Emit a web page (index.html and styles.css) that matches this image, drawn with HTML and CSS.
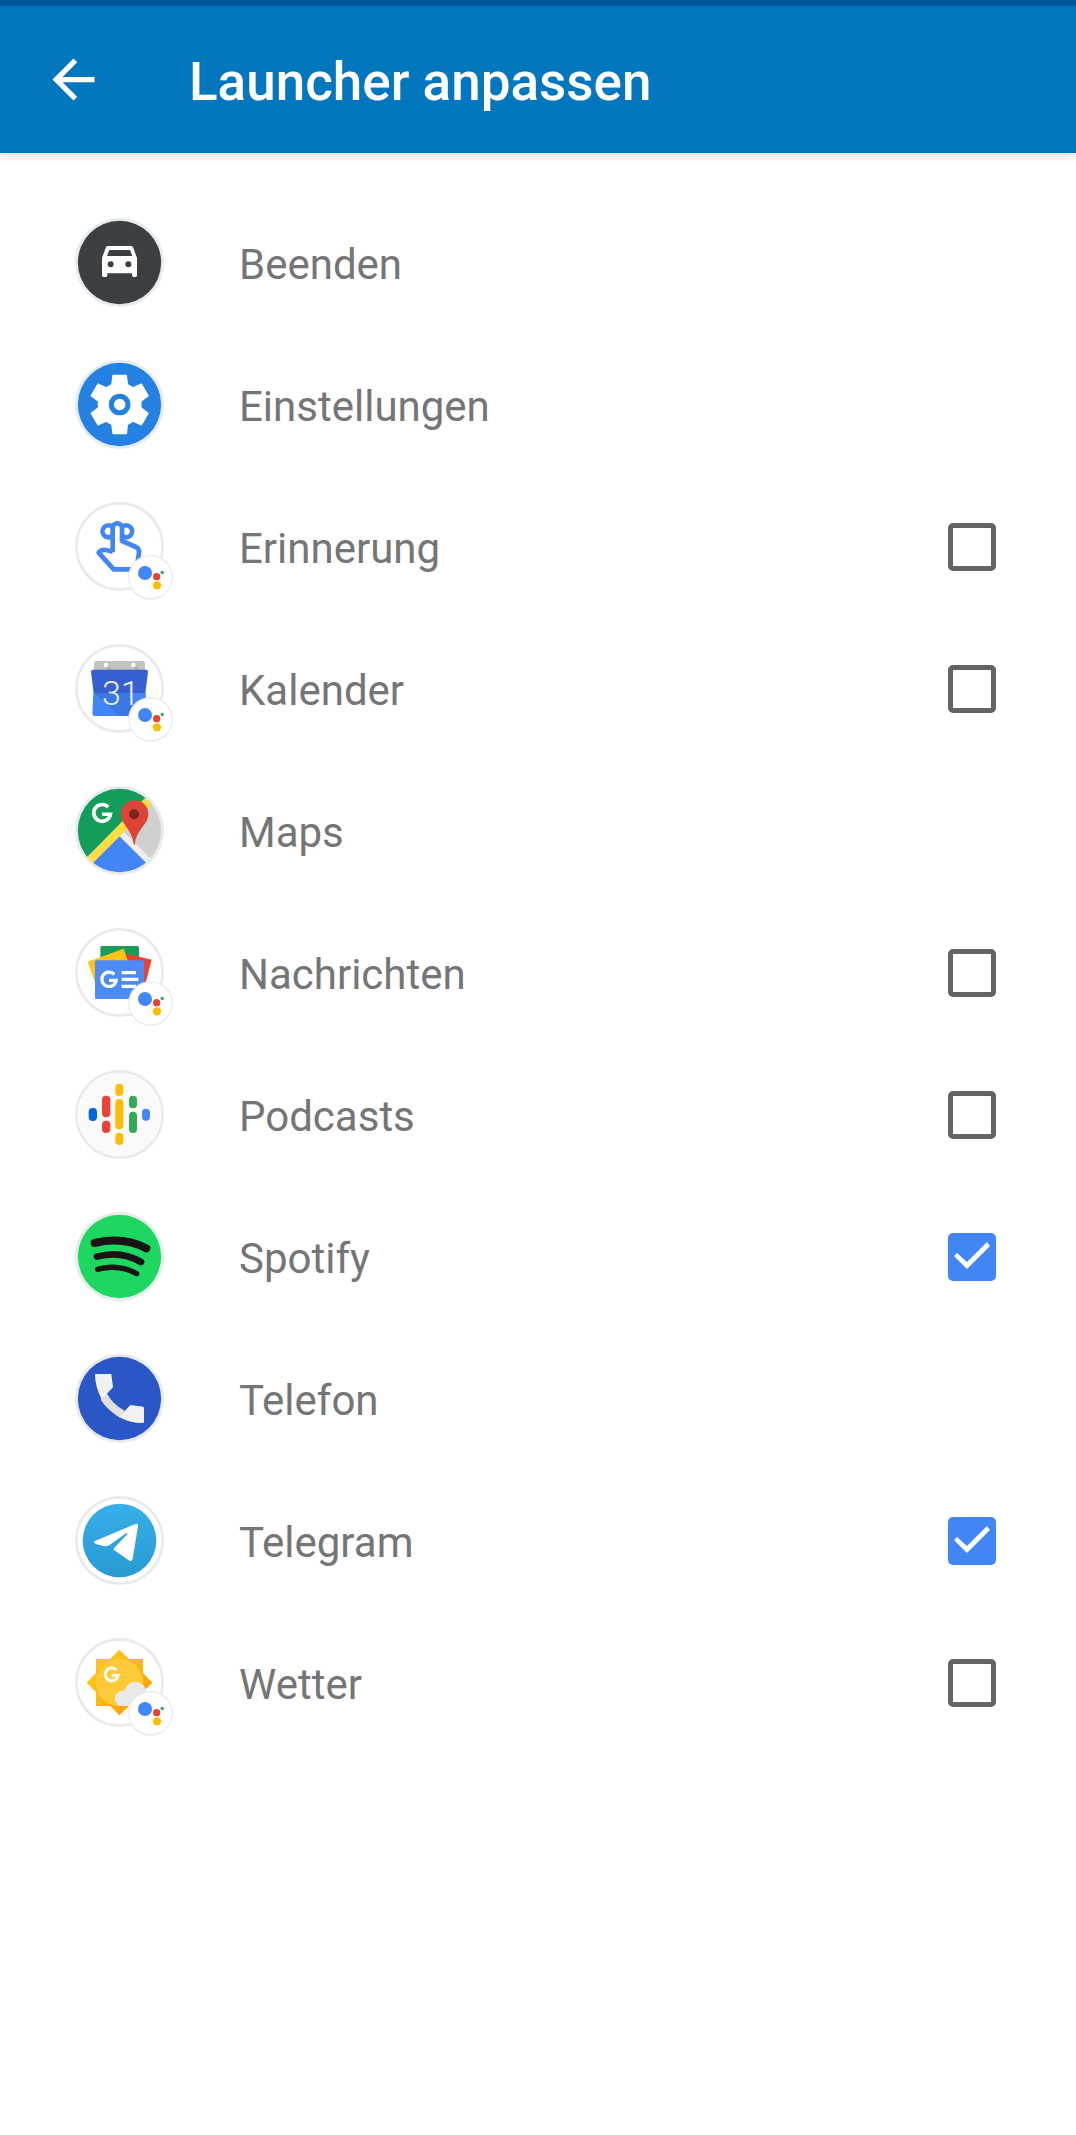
FILE: index.html
```html
<!DOCTYPE html>
<html lang="de">
<head>
<meta charset="utf-8">
<meta name="viewport" content="width=device-width, initial-scale=1">
<title>Launcher anpassen</title>
<link rel="stylesheet" href="styles.css">
</head>
<body>
<svg class="defs" width="0" height="0" aria-hidden="true">
  <defs>
    <g id="ring"><circle cx="178.500" cy="169.500" r="129.500" fill="#fff" stroke="#e8eaed" stroke-width="8"/></g>
    <g id="assistant">
      <circle cx="271.500" cy="262" r="65" fill="#fff" stroke="#e8eaed" stroke-width="4"/>
      <circle cx="255" cy="249" r="21" fill="#4285f4"/>
      <circle cx="290" cy="260" r="11" fill="#ea4335"/>
      <circle cx="291" cy="286" r="12.500" fill="#fbbc05"/>
      <circle cx="306.500" cy="247.500" r="5" fill="#34a853"/>
    </g>
    <path id="g-mark" d="M20 -20A27 27 0 1 0 27 3H0" fill="none" stroke="#fff" stroke-width="12"/>
    <linearGradient id="sky" x1="0" y1="0" x2="0" y2="1"><stop offset="0" stop-color="#38aeeb"/><stop offset="1" stop-color="#279ad1"/></linearGradient>
    <linearGradient id="sun" x1="0" y1="0" x2="1" y2="1"><stop offset="0" stop-color="#ffca28"/><stop offset=".5" stop-color="#fbb90e"/><stop offset="1" stop-color="#ff8f00"/></linearGradient>
    <clipPath id="disc"><circle cx="178.500" cy="169.500" r="125"/></clipPath>
  </defs>
</svg>

<header class="bar">
  <button class="back" type="button" aria-label="Zurück">
    <svg viewBox="0 0 24 24"><path fill="#fff" d="M20 11H7.830l5.590-5.590L12 4l-8 8 8 8 1.410-1.410L7.830 13H20z"/></svg>
  </button>
  <h1 class="title">Launcher anpassen</h1>
</header>

<main>
<ul class="list">
  <li class="row">
    <svg class="icon" viewBox="0 -9 360 360" aria-hidden="true">
      <use href="#ring"/><circle cx="178.500" cy="169.500" r="125" fill="#3c4043"/>
      <path fill="#fff" fill-rule="evenodd" d="M144 120H213Q217 120 219 124L231 155V208Q231 213 227 213H221Q216 213 216 208V202H142V208Q142 213 137 213H131Q126 213 126 208V155L138 124Q140 120 144 120ZM148 132L141 150H217L210 132Z"/>
      <circle cx="152" cy="175" r="9" fill="#3c4043"/><circle cx="205" cy="175" r="9" fill="#3c4043"/>
    </svg>
    <span class="name">Beenden</span>
  </li>
  <li class="row">
    <svg class="icon" viewBox="0 -9 360 360" aria-hidden="true">
      <use href="#ring"/><circle cx="178.500" cy="169.500" r="125" fill="#2481e1"/>
      <g transform="translate(179 169.500)">
        <circle r="66" fill="#fff"/>
        <g fill="#fff" stroke="#fff" stroke-width="4" stroke-linejoin="round">
          <path id="tooth" d="M-20 -87H20L24 -54L50 -10H-50L-24 -54Z"/>
          <use href="#tooth" transform="rotate(60)"/><use href="#tooth" transform="rotate(120)"/><use href="#tooth" transform="rotate(180)"/><use href="#tooth" transform="rotate(240)"/><use href="#tooth" transform="rotate(300)"/>
        </g>
        <circle r="25" fill="#fff" stroke="#2481e1" stroke-width="15"/>
      </g>
    </svg>
    <span class="name">Einstellungen</span>
  </li>
  <li class="row">
    <svg class="icon" viewBox="0 -9 360 360" aria-hidden="true">
      <use href="#ring"/>
      <g fill="none" stroke="#4285f4" stroke-width="14">
        <path d="M158 111A18 18 0 1 0 158 137M158 141H142M186 111A18 18 0 1 1 186 137M186 141H203"/>
        <path stroke-linejoin="round" d="M158 187V114A13 13 0 0 1 186 114V153L228 171Q239 177 237 189L229 238H161L116 188Q123 178 137 180L158 185"/>
      </g>
      <use href="#assistant"/>
    </svg>
    <label class="name" for="reminder">Erinnerung</label>
    <input class="check" type="checkbox" id="reminder">
  </li>
  <li class="row">
    <svg class="icon" viewBox="0 -9 360 360" aria-hidden="true">
      <use href="#ring"/>
      <path fill="#c2c2c2" d="M102 115V96Q102 87 111 87H246Q255 87 255 96V115Z"/>
      <path fill="#b0b0b0" d="M133 103L145 115H158L142 95ZM216 103L228 115H241L225 95Z"/>
      <circle cx="138" cy="99" r="7" fill="#fff"/><circle cx="220" cy="99" r="7" fill="#fff"/>
      <path fill="#3660d0" d="M99 113H258Q264 113 264 119L256 184H101L93 119Q93 113 99 113Z"/>
      <path fill="#4285f4" d="M100 183H257L260 245Q260 252 253 252H104Q97 252 97 245Z"/>
      <path fill="#3b78e0" d="M104 183H215V252H177Z"/>
      <text class="day" x="126" y="219">31</text>
      <use href="#assistant"/>
    </svg>
    <label class="name" for="calendar">Kalender</label>
    <input class="check" type="checkbox" id="calendar">
  </li>
  <li class="row">
    <svg class="icon" viewBox="0 -9 360 360" aria-hidden="true">
      <use href="#ring"/>
      <g clip-path="url(#disc)">
        <path fill="#d0d0d0" d="M40 40H320V310H40Z"/>
        <path fill="#129d5a" d="M40 40H290L60 270H40Z"/>
        <path fill="#ffdc3f" d="M255 72L277 90L85 282L62 272Z"/>
        <path fill="#4285f4" d="M179 187L290 298H68Z"/>
        <path fill="#eee" d="M192 174L300 282L284 291L179 187Z"/>
      </g>
      <use href="#g-mark" transform="translate(126 118) scale(.93)"/>
      <path fill="#db4437" d="M224 79A41 41 0 0 1 265 120C265 153 230 164 225 210Q224 216 221 210C216 164 183 153 183 120A41 41 0 0 1 224 79Z"/>
      <circle cx="222" cy="121" r="15" fill="#7b231e"/>
    </svg>
    <span class="name">Maps</span>
  </li>
  <li class="row">
    <svg class="icon" viewBox="0 -9 360 360" aria-hidden="true">
      <use href="#ring"/>
      <rect x="121" y="90" width="116" height="80" rx="5" fill="#1a9d59"/>
      <path fill="#e94235" d="M200 113L275 131L252 220L185 180Z"/>
      <path fill="#c5352c" d="M200 113L205 134H192Z"/>
      <path fill="#fdc315" d="M83 137L191 98L204 134L120 240Z"/>
      <rect x="105" y="133" width="147" height="116" rx="4" fill="#4c8bf5"/>
      <use href="#g-mark" transform="translate(147 191) scale(.8)"/>
      <path fill="#fff" d="M185 165H228V175H185ZM185 185H235V195H185ZM185 206H228V216H185Z"/>
      <use href="#assistant"/>
    </svg>
    <label class="name" for="news">Nachrichten</label>
    <input class="check" type="checkbox" id="news">
  </li>
  <li class="row">
    <svg class="icon" viewBox="0 -9 360 360" aria-hidden="true">
      <use href="#ring"/><circle cx="178.500" cy="169.500" r="125.500" fill="#fafafa"/>
      <g fill="#fbbc05"><rect x="166" y="77" width="24" height="37" rx="12"/><rect x="166" y="123" width="24" height="91" rx="12"/><rect x="166" y="224" width="24" height="37" rx="12"/></g>
      <g fill="#ea4335"><rect x="126" y="113" width="25" height="65" rx="12"/><rect x="126" y="188" width="25" height="37" rx="12"/></g>
      <g fill="#34a853"><rect x="207" y="113" width="24" height="38" rx="12"/><rect x="207" y="161" width="24" height="64" rx="12"/></g>
      <rect x="86" y="150" width="25" height="39" rx="12" fill="#0066d9"/><rect x="246" y="152" width="24" height="36" rx="12" fill="#4285f4"/>
    </svg>
    <label class="name" for="podcasts">Podcasts</label>
    <input class="check" type="checkbox" id="podcasts">
  </li>
  <li class="row">
    <svg class="icon" viewBox="0 -9 360 360" aria-hidden="true">
      <use href="#ring"/><circle cx="178.500" cy="169.500" r="125" fill="#1ed760"/>
      <g fill="none" stroke="#191414" stroke-linecap="round">
        <path stroke-width="24" d="M104 129Q189 109 259 145"/>
        <path stroke-width="20" d="M111 170Q181 150 243 186"/>
        <path stroke-width="16" d="M113 208Q176 191 230 221"/>
      </g>
    </svg>
    <label class="name" for="spotify">Spotify</label>
    <input class="check" type="checkbox" id="spotify" checked>
  </li>
  <li class="row">
    <svg class="icon" viewBox="0 -9 360 360" aria-hidden="true">
      <use href="#ring"/><circle cx="178.500" cy="169.500" r="125" fill="#2a56c6"/>
      <path fill="#e0e0e0" d="M140 153Q158 188 194 206L180 227Q142 204 122 173Z"/>
      <path fill="#f1f1f1" d="M108 96H154L159 136L125 172Q106 137 105 99Q105 96 108 96ZM211 189L249 194Q252 195 252 198V239Q252 243 248 243Q208 243 178 225Z"/>
    </svg>
    <span class="name">Telefon</span>
  </li>
  <li class="row">
    <svg class="icon" viewBox="0 -9 360 360" aria-hidden="true">
      <use href="#ring"/><circle cx="178.500" cy="169.500" r="110.500" fill="url(#sky)"/>
      <path fill="#fff" d="M105 171L226 120Q235 117 234 127L218 224Q216 234 206 229L163 199Q159 195 163 191L202 151Q204 146 198 148L149 183Q140 188 129 186L106 179Q99 175 105 171Z"/>
    </svg>
    <label class="name" for="telegram">Telegram</label>
    <input class="check" type="checkbox" id="telegram" checked>
  </li>
  <li class="row">
    <svg class="icon" viewBox="0 -9 360 360" aria-hidden="true">
      <use href="#ring"/>
      <path fill="url(#sun)" d="M108 99H150L178 71L207 99H249V141L277 170L249 198V240H207L178 268L150 240H108V198L80 170L108 141Z"/>
      <circle cx="178.500" cy="169.500" r="71" fill="#ffca37"/>
      <use href="#g-mark" transform="translate(155 146) scale(.72)"/>
      <path fill="#e9e9eb" d="M182 240A23 23 0 1 1 193 195A34 34 0 0 1 260 198L270 240Z"/>
      <use href="#assistant"/>
    </svg>
    <label class="name" for="weather">Wetter</label>
    <input class="check" type="checkbox" id="weather">
  </li>
</ul>
</main>
</body>
</html>
```
FILE: styles.css
```css
* {
  box-sizing: border-box;
}

body {
  margin: 0;
  background: #fff;
  font-family: Roboto, "Liberation Sans", sans-serif;
}

.defs {
  display: block;
}

.bar {
  display: flex;
  align-items: center;
  height: 153px;
  padding-left: 42px;
  border-top: 6px solid #01579b;
  background: #0277bd;
  box-shadow: 0 2px 10px rgba(0, 0, 0, 0.16);
}

.back {
  width: 63px;
  height: 63px;
  padding: 0;
  border: 0;
  background: none;
}

.back svg {
  display: block;
}

.title {
  margin: 0 0 0 84px;
  padding-top: 4px;
  color: #fff;
  font-size: 53px;
  font-weight: 500;
  line-height: 64px;
}

.list {
  margin: 0;
  padding: 39px 80px 39px 60px;
  list-style: none;
}

.row {
  display: flex;
  align-items: center;
  height: 142px;
}

.icon {
  flex: none;
  width: 120px;
  height: 120px;
}

.name {
  flex: 1;
  margin-left: 59px;
  padding-top: 4px;
  color: #757575;
  font-size: 42px;
  line-height: 56px;
}

.day {
  fill: #eee;
  font-size: 102px;
  font-weight: 300;
}

.check {
  flex: none;
  appearance: none;
  width: 48px;
  height: 48px;
  margin: 0;
  border: 5px solid #636363;
  border-radius: 5px;
}

.check:checked {
  border: 0;
  background: #4285f4;
}

.check:checked::before {
  content: "";
  display: block;
  width: 48px;
  height: 48px;
  background: #fff;
  clip-path: polygon(6px 23px, 9px 20px, 19px 29px, 39px 9px, 42px 13px, 19px 36px);
}
```
